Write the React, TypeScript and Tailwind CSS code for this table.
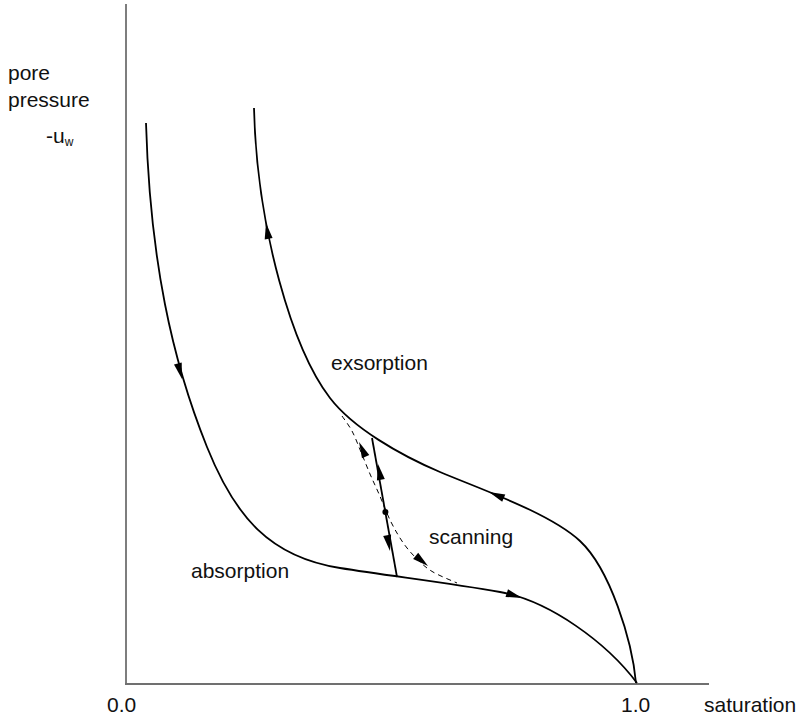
import React from 'react';

type Pt = [number, number];

// Catmull-Rom through the points, written out as cubic beziers
function smooth(pts: Pt[]) {
  let d = `M${pts[0][0]},${pts[0][1]}`;
  for (let i = 0; i < pts.length - 1; i++) {
    const p0 = pts[i - 1] ?? pts[i];
    const p1 = pts[i];
    const p2 = pts[i + 1];
    const p3 = pts[i + 2] ?? p2;
    const c1x = p1[0] + (p2[0] - p0[0]) / 6;
    const c1y = p1[1] + (p2[1] - p0[1]) / 6;
    const c2x = p2[0] - (p3[0] - p1[0]) / 6;
    const c2y = p2[1] - (p3[1] - p1[1]) / 6;
    d += ` C${c1x.toFixed(1)},${c1y.toFixed(1)} ${c2x.toFixed(1)},${c2y.toFixed(1)} ${p2[0]},${p2[1]}`;
  }
  return d;
}

function Arrow({ tip, dir, len = 16, half = 4 }: { tip: Pt; dir: Pt; len?: number; half?: number }) {
  const m = Math.hypot(dir[0], dir[1]);
  const ux = dir[0] / m;
  const uy = dir[1] / m;
  const bx = tip[0] - ux * len;
  const by = tip[1] - uy * len;
  const pts = [
    `${tip[0]},${tip[1]}`,
    `${(bx - uy * half).toFixed(1)},${(by + ux * half).toFixed(1)}`,
    `${(bx + uy * half).toFixed(1)},${(by - ux * half).toFixed(1)}`,
  ].join(' ');
  return <polygon points={pts} fill="#000" />;
}

// wetting branch, top-left down to S = 1.0
const absorption =
  'M146,123 C150,260 172,360 207,447 C235,517 270,557 340,568 C390,576 450,583 500,592 C550,601 607,643 637,683';

// drying branch
const exsorption =
  'M254,108 C257,230 293,350 330,398 C353,428 400,455 440,472 C480,489 550,513 580,541 C610,569 632,640 636,683';

const dashed: Pt[] = [
  [342, 416], [352, 431], [361, 452], [370, 474], [379, 494], [391, 522], [404, 544],
  [418, 560], [433, 572], [457, 583],
];

const label = { fontFamily: '"Liberation Sans", Arial, sans-serif', fontSize: 21, fill: '#111' };

export default function App() {
  return (
    <div className="w-[803px] h-[720px] bg-white overflow-hidden">
      <svg width="803" height="720" viewBox="0 0 803 720" className="block">
        {/* axes */}
        <line x1="126" y1="4" x2="126" y2="684" stroke="#707070" strokeWidth="1.8" />
        <line x1="125" y1="684" x2="709" y2="684" stroke="#707070" strokeWidth="1.8" />

        {/* curves */}
        <path d={absorption} fill="none" stroke="#000" strokeWidth="1.8" />
        <path d={exsorption} fill="none" stroke="#000" strokeWidth="1.8" />
        <path d={smooth(dashed)} fill="none" stroke="#000" strokeWidth="1" strokeDasharray="5 4" />
        <line x1="372" y1="438" x2="397" y2="577" stroke="#000" strokeWidth="1.8" />
        <circle cx="385.4" cy="512" r="3" fill="#000" />

        {/* direction arrows */}
        <Arrow tip={[182, 379]} dir={[16, 60]} />
        <Arrow tip={[266, 223]} dir={[-5, -30]} />
        <Arrow tip={[489, 492]} dir={[-60, -25]} />
        <Arrow tip={[522, 598]} dir={[40, 13]} />
        <Arrow tip={[378, 464]} dir={[-25, -138]} />
        <Arrow tip={[390, 551]} dir={[25, 138]} />
        <Arrow tip={[359, 442]} dir={[-10, -22]} />
        <Arrow tip={[428, 566]} dir={[17, 14]} />

        {/* labels */}
        <text x="8" y="80" {...label}>pore</text>
        <text x="8" y="107" {...label}>pressure</text>
        <text x="46" y="143" {...label}>-u<tspan fontSize="12" dy="3" fill="#111">w</tspan></text>
        <text x="331" y="370" {...label}>exsorption</text>
        <text x="429" y="544" {...label}>scanning</text>
        <text x="191" y="578" {...label}>absorption</text>
        <text x="107" y="712" {...label}>0.0</text>
        <text x="621" y="712" {...label}>1.0</text>
        <text x="704" y="712" {...label}>saturation</text>
      </svg>
    </div>
  );
}
